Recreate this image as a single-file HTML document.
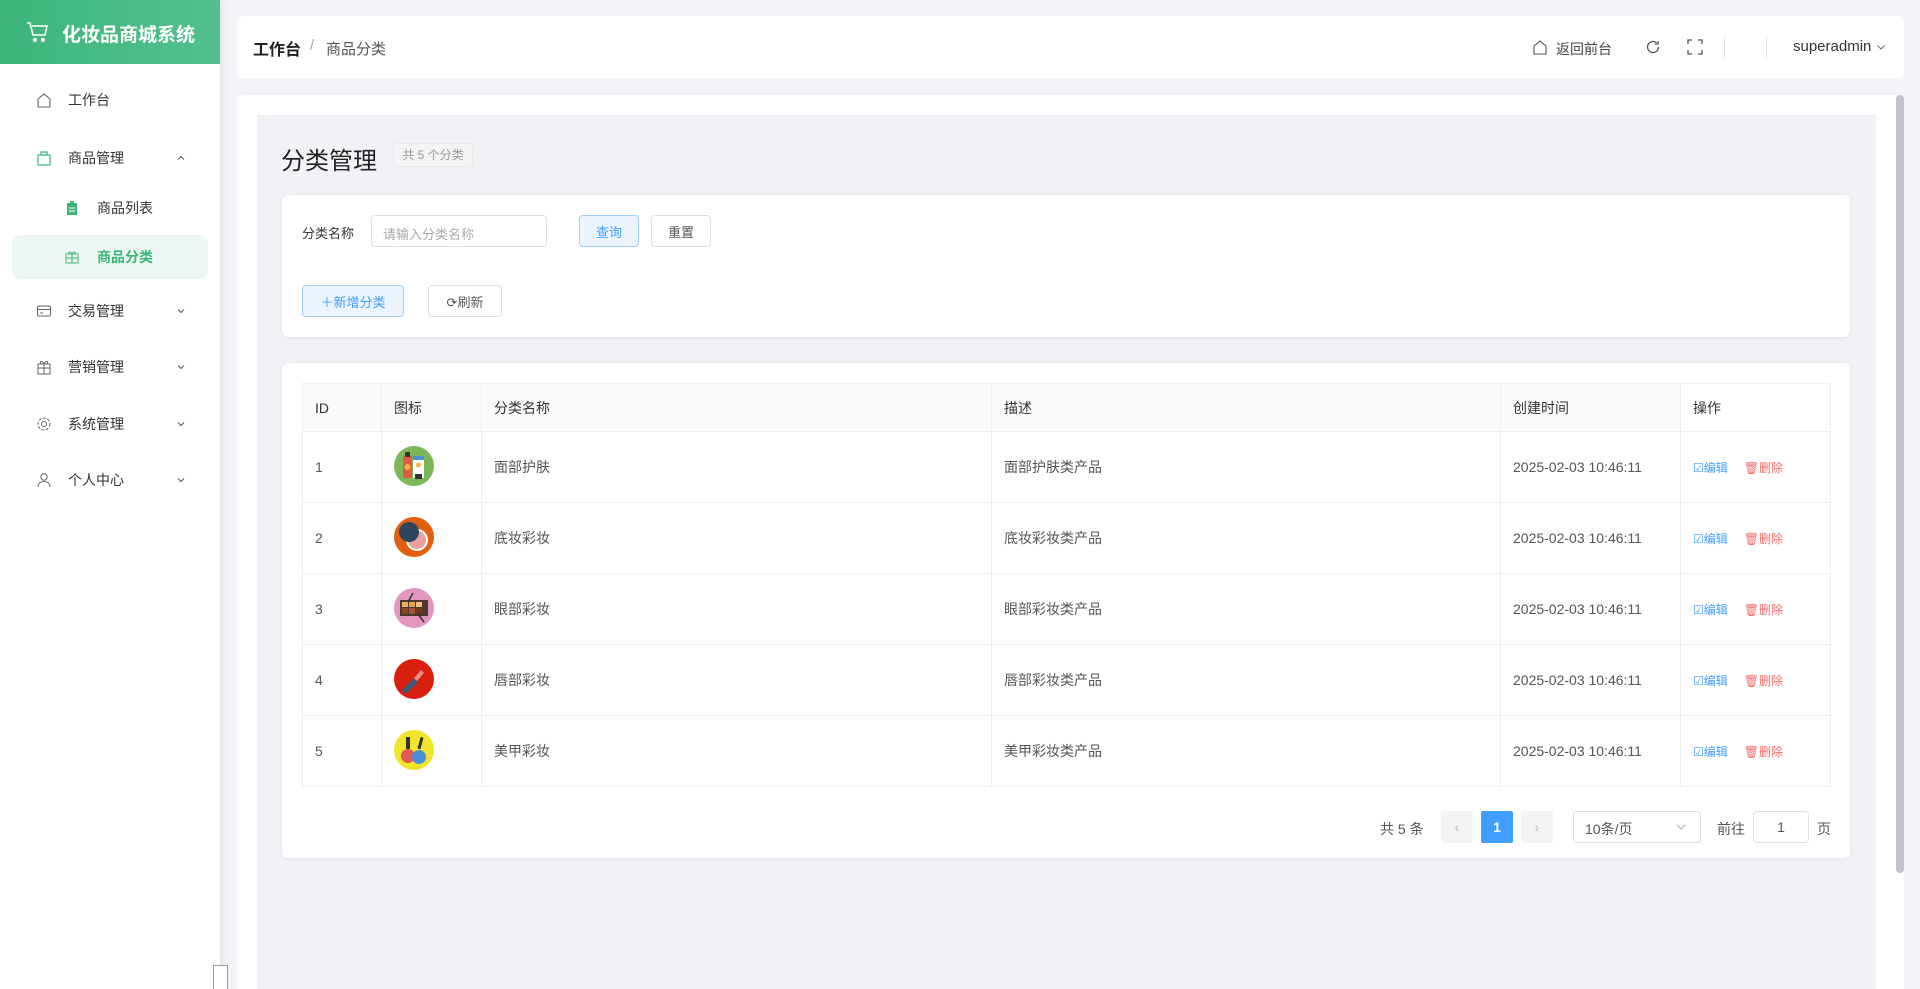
<!DOCTYPE html>
<html><head><meta charset="utf-8">
<style>
*{box-sizing:border-box;margin:0;padding:0}
body{width:1920px;height:989px;overflow:hidden;background:#f3f4f7;font-family:"Liberation Sans","Noto Sans CJK SC",sans-serif;color:#333;position:relative}
.abs{position:absolute}
.side{left:0;top:0;width:220px;height:989px;background:#fff;box-shadow:2px 0 8px rgba(0,0,0,.08);z-index:2}
.logo{left:0;top:0;width:220px;height:64px;background:linear-gradient(90deg,#3db57a,#52c08e);color:#fff;font-size:19px;font-weight:bold}
.mi{position:absolute;left:0;width:220px;height:40px;display:flex;align-items:center;font-size:14px;color:#333}
.mi svg{position:absolute;left:36px}
.mi .t{position:absolute;left:68px}
.mi .ar{position:absolute;left:176px}
.card{background:#fff;border-radius:6px}
.btn{position:absolute;height:32px;border:1px solid #dcdfe6;border-radius:4px;background:#fff;font-size:14px;color:#555;display:flex;align-items:center;justify-content:center}
.bp{background:#ecf5ff;border-color:#a0cfff;color:#409eff}
table{border-collapse:collapse;font-size:14px;color:#555}
td,th{border:1px solid #ebeef5;text-align:left;font-weight:normal;padding:0 12px}
th{height:48px;background:#fafafa;color:#333}
td{height:71px}
.ed{color:#409eff;font-size:12px}.de{color:#f56c6c;font-size:12px;margin-left:16px}
</style></head><body>
<div class="abs side">
 <div class="abs logo"><svg class="abs" style="left:26px;top:20px" width="24" height="24" viewBox="0 0 24 24" fill="none" stroke="#fff" stroke-width="1.6"><path d="M1 3h3l3 12h12l2-9H6"/><circle cx="9" cy="20" r="1.3" fill="#fff"/><circle cx="17" cy="20" r="1.3" fill="#fff"/></svg><span class="abs" style="left:62px;top:20px">化妆品商城系统</span></div>
 <div class="mi" style="top:80px"><svg width="16" height="16" viewBox="0 0 16 16" fill="none" stroke="#666" stroke-width="1.1"><path d="M2 7L8 2l6 5v8H2z"/></svg><span class="t">工作台</span></div>
 <div class="mi" style="top:138px"><svg width="16" height="16" viewBox="0 0 16 16" fill="none" stroke="#3db57a" stroke-width="1.2"><path d="M2 5h12v10H2zM5 5V2h6v3"/></svg><span class="t">商品管理</span><svg class="ar" style="left:176px" width="10" height="10" viewBox="0 0 10 10" fill="none" stroke="#555"><path d="M2 6.5l3-3 3 3"/></svg></div>
 <div class="mi" style="top:188px"><svg style="left:66px" width="12" height="14" viewBox="0 0 12 14"><rect x="1" y="2" width="10" height="12" fill="#3db57a"/><rect x="4" y="0" width="4" height="3" fill="#3db57a"/><path d="M3 7h6M3 10h6" stroke="#fff"/></svg><span class="t" style="left:97px">商品列表</span></div>
 <div class="abs" style="left:12px;top:235px;width:196px;height:44px;background:#edf8f2;border-radius:8px"></div>
 <div class="mi" style="top:237px;color:#3db57a;font-weight:bold"><svg style="left:65px" width="14" height="14" viewBox="0 0 14 14" fill="none" stroke="#3db57a"><path d="M1 4h12v9H1zM1 8h12M7 4v9M4 4c-1-2 1-3 3 0 2-3 4-2 3 0"/></svg><span class="t" style="left:97px">商品分类</span></div>
 <div class="mi" style="top:291px"><svg width="16" height="16" viewBox="0 0 16 16" fill="none" stroke="#666"><rect x="1.5" y="3" width="13" height="10" rx="1"/><path d="M1.5 6.5h13M4 10h3"/></svg><span class="t">交易管理</span><svg class="ar" width="10" height="10" viewBox="0 0 10 10" fill="none" stroke="#555"><path d="M2 3.5l3 3 3-3"/></svg></div>
 <div class="mi" style="top:347px"><svg width="16" height="16" viewBox="0 0 16 16" fill="none" stroke="#666"><path d="M2 5h12v10H2zM2 9h12M8 5v10M5 5C3 2 6 1 8 5c2-4 5-3 3 0"/></svg><span class="t">营销管理</span><svg class="ar" width="10" height="10" viewBox="0 0 10 10" fill="none" stroke="#555"><path d="M2 3.5l3 3 3-3"/></svg></div>
 <div class="mi" style="top:404px"><svg width="16" height="16" viewBox="0 0 16 16" fill="none" stroke="#666"><circle cx="8" cy="8" r="2.5"/><circle cx="8" cy="8" r="6" stroke-dasharray="3 1.5"/></svg><span class="t">系统管理</span><svg class="ar" width="10" height="10" viewBox="0 0 10 10" fill="none" stroke="#555"><path d="M2 3.5l3 3 3-3"/></svg></div>
 <div class="mi" style="top:460px"><svg width="16" height="16" viewBox="0 0 16 16" fill="none" stroke="#666"><circle cx="8" cy="5" r="3.2"/><path d="M2 15c0-4 3-5.5 6-5.5s6 1.5 6 5.5"/></svg><span class="t">个人中心</span><svg class="ar" width="10" height="10" viewBox="0 0 10 10" fill="none" stroke="#555"><path d="M2 3.5l3 3 3-3"/></svg></div>
 <div class="abs" style="left:213px;top:965px;width:15px;height:24px;background:#fff;border:1px solid #999;border-bottom:none"></div>
</div>

<div class="abs card" style="left:237px;top:16px;width:1667px;height:62px"></div>
<div class="abs" style="left:253px;top:36px;font-size:16px;font-weight:bold;color:#222">工作台</div>
<div class="abs" style="left:310px;top:37px;font-size:15px;color:#aaa">/</div>
<div class="abs" style="left:326px;top:38px;font-size:15px;color:#555">商品分类</div>
<svg class="abs" style="left:1532px;top:39px" width="16" height="16" viewBox="0 0 16 16" fill="none" stroke="#555" stroke-width="1.1"><path d="M2 7L8 2l6 5v8H2z"/></svg>
<div class="abs" style="left:1556px;top:39px;font-size:14px;color:#444">返回前台</div>
<svg class="abs" style="left:1645px;top:39px" width="16" height="16" viewBox="0 0 16 16" fill="none" stroke="#555" stroke-width="1.3"><path d="M13.5 8A5.5 5.5 0 1 1 11.5 3.8M13 2v3h-3"/></svg>
<svg class="abs" style="left:1687px;top:39px" width="16" height="16" viewBox="0 0 16 16" fill="none" stroke="#555" stroke-width="1.3"><path d="M1 5V1h4M11 1h4v4M15 11v4h-4M5 15H1v-4"/></svg>
<div class="abs" style="left:1724px;top:36px;width:1px;height:22px;background:#e5e5e5"></div>
<div class="abs" style="left:1766px;top:36px;width:1px;height:22px;background:#e5e5e5"></div>
<div class="abs" style="left:1793px;top:38px;font-size:15px;color:#333">superadmin</div>
<svg class="abs" style="left:1876px;top:42px" width="10" height="10" viewBox="0 0 10 10" fill="none" stroke="#666"><path d="M1.5 3.5l3.5 3.5 3.5-3.5"/></svg>

<div class="abs" style="left:237px;top:95px;width:1667px;height:894px;background:#fff;border-radius:6px 6px 0 0"></div>
<div class="abs" style="left:257px;top:115px;width:1619px;height:874px;background:#f0f2f5"></div>
<div class="abs" style="left:1896px;top:95px;width:8px;height:778px;background:#c1c4cb;border-radius:4px"></div>

<div class="abs" style="left:281px;top:141px;font-size:24px;color:#222">分类管理</div>
<div class="abs" style="left:393px;top:143px;width:80px;height:24px;background:#f4f4f5;border:1px solid #e9e9eb;border-radius:4px;font-size:12px;color:#999;text-align:center;line-height:22px">共 5 个分类</div>

<div class="abs card" style="left:282px;top:195px;width:1568px;height:142px;box-shadow:0 1px 4px rgba(0,0,0,.06)"></div>
<div class="abs" style="left:302px;top:223px;font-size:13px;color:#333">分类名称</div>
<div class="abs" style="left:371px;top:215px;width:176px;height:32px;border:1px solid #dcdfe6;border-radius:4px;font-size:13px;color:#aaa;padding:8px 11px">请输入分类名称</div>
<div class="btn bp" style="left:579px;top:215px;width:60px;font-size:13px">查询</div>
<div class="btn" style="left:651px;top:215px;width:60px;font-size:13px">重置</div>
<div class="btn bp" style="left:302px;top:285px;width:102px;font-size:13px">＋新增分类</div>
<div class="btn" style="left:428px;top:285px;width:74px;font-size:13px">⟳刷新</div>

<div class="abs card" style="left:282px;top:363px;width:1568px;height:495px;box-shadow:0 1px 4px rgba(0,0,0,.06)"></div>
<table class="abs" style="left:302px;top:383px;width:1529px">
<tr><th style="width:79px">ID</th><th style="width:100px">图标</th><th style="width:510px">分类名称</th><th style="width:509px">描述</th><th style="width:180px">创建时间</th><th style="background:#fff">操作</th></tr>
<tr><td>1</td><td><svg width="40" height="40" viewBox="0 0 40 40"><circle cx="20" cy="20" r="20" fill="#7cb85a"/><rect x="9" y="10" width="9" height="22" fill="#e05a44"/><rect x="11" y="6" width="5" height="5" fill="#333"/><circle cx="13.5" cy="21" r="3" fill="#f3b33e"/><rect x="19" y="10" width="11" height="22" fill="#fff"/><rect x="19" y="10" width="11" height="4" fill="#4a90d9"/><circle cx="24.5" cy="19" r="2.5" fill="#f3b33e"/><rect x="21" y="28" width="7" height="5" fill="#333"/></svg></td><td>面部护肤</td><td>面部护肤类产品</td><td>2025-02-03 10:46:11</td><td><span class="ed">☑编辑</span><span class="de">🗑删除</span></td></tr>
<tr><td>2</td><td><svg width="40" height="40" viewBox="0 0 40 40"><circle cx="20" cy="20" r="20" fill="#e0600f"/><circle cx="23" cy="23" r="11" fill="#fff"/><circle cx="23" cy="23" r="9" fill="#e8a0a0"/><circle cx="15" cy="15" r="10" fill="#2c4660"/></svg></td><td>底妆彩妆</td><td>底妆彩妆类产品</td><td>2025-02-03 10:46:11</td><td><span class="ed">☑编辑</span><span class="de">🗑删除</span></td></tr>
<tr><td>3</td><td><svg width="40" height="40" viewBox="0 0 40 40"><circle cx="20" cy="20" r="20" fill="#e596c0"/><rect x="6" y="12" width="28" height="16" fill="#4a3a30"/><rect x="8" y="14" width="6" height="5" fill="#f0b060"/><rect x="15" y="14" width="6" height="5" fill="#e8a050"/><rect x="22" y="14" width="6" height="5" fill="#f0c080"/><rect x="8" y="20" width="6" height="6" fill="#8b4a20"/><rect x="15" y="20" width="6" height="6" fill="#a0582a"/><rect x="22" y="20" width="6" height="6" fill="#6a3a1a"/><path d="M14 14L19 5M24 26l6 8" stroke="#333" stroke-width="1.5"/></svg></td><td>眼部彩妆</td><td>眼部彩妆类产品</td><td>2025-02-03 10:46:11</td><td><span class="ed">☑编辑</span><span class="de">🗑删除</span></td></tr>
<tr><td>4</td><td><svg width="40" height="40" viewBox="0 0 40 40"><circle cx="20" cy="20" r="20" fill="#d9200e"/><path d="M8 31l12-12 4 4-12 12z" fill="#3a5a7a"/><path d="M20 19l7-8 3 3-7 8z" fill="#e88a8a"/></svg></td><td>唇部彩妆</td><td>唇部彩妆类产品</td><td>2025-02-03 10:46:11</td><td><span class="ed">☑编辑</span><span class="de">🗑删除</span></td></tr>
<tr><td>5</td><td><svg width="40" height="40" viewBox="0 0 40 40"><circle cx="20" cy="20" r="20" fill="#f0e52a"/><rect x="12" y="7" width="4" height="12" fill="#333"/><circle cx="14" cy="26" r="7" fill="#e05a5a"/><rect x="25" y="7" width="3" height="12" fill="#333" transform="rotate(15 26 13)"/><circle cx="25" cy="27" r="7" fill="#4a90d9"/></svg></td><td>美甲彩妆</td><td>美甲彩妆类产品</td><td>2025-02-03 10:46:11</td><td><span class="ed">☑编辑</span><span class="de">🗑删除</span></td></tr>
</table>

<div class="abs" style="left:1380px;top:819px;font-size:14px;color:#555">共 5 条</div>
<div class="abs" style="left:1441px;top:811px;width:32px;height:32px;background:#f4f4f5;border-radius:2px;color:#bbb;text-align:center;line-height:32px;font-size:14px">‹</div>
<div class="abs" style="left:1481px;top:811px;width:32px;height:32px;background:#409eff;border-radius:2px;color:#fff;text-align:center;line-height:32px;font-size:14px;font-weight:bold">1</div>
<div class="abs" style="left:1521px;top:811px;width:32px;height:32px;background:#f4f4f5;border-radius:2px;color:#bbb;text-align:center;line-height:32px;font-size:14px">›</div>
<div class="abs" style="left:1573px;top:811px;width:128px;height:32px;border:1px solid #dcdfe6;border-radius:4px;font-size:14px;color:#555;padding:7px 11px">10条/页</div>
<svg class="abs" style="left:1676px;top:822px" width="10" height="10" viewBox="0 0 10 10" fill="none" stroke="#aaa"><path d="M1 3l4 4 4-4"/></svg>
<div class="abs" style="left:1717px;top:819px;font-size:14px;color:#555">前往</div>
<div class="abs" style="left:1753px;top:811px;width:56px;height:32px;border:1px solid #dcdfe6;border-radius:4px;font-size:14px;color:#555;text-align:center;line-height:30px">1</div>
<div class="abs" style="left:1817px;top:819px;font-size:14px;color:#555">页</div>
</body></html>
